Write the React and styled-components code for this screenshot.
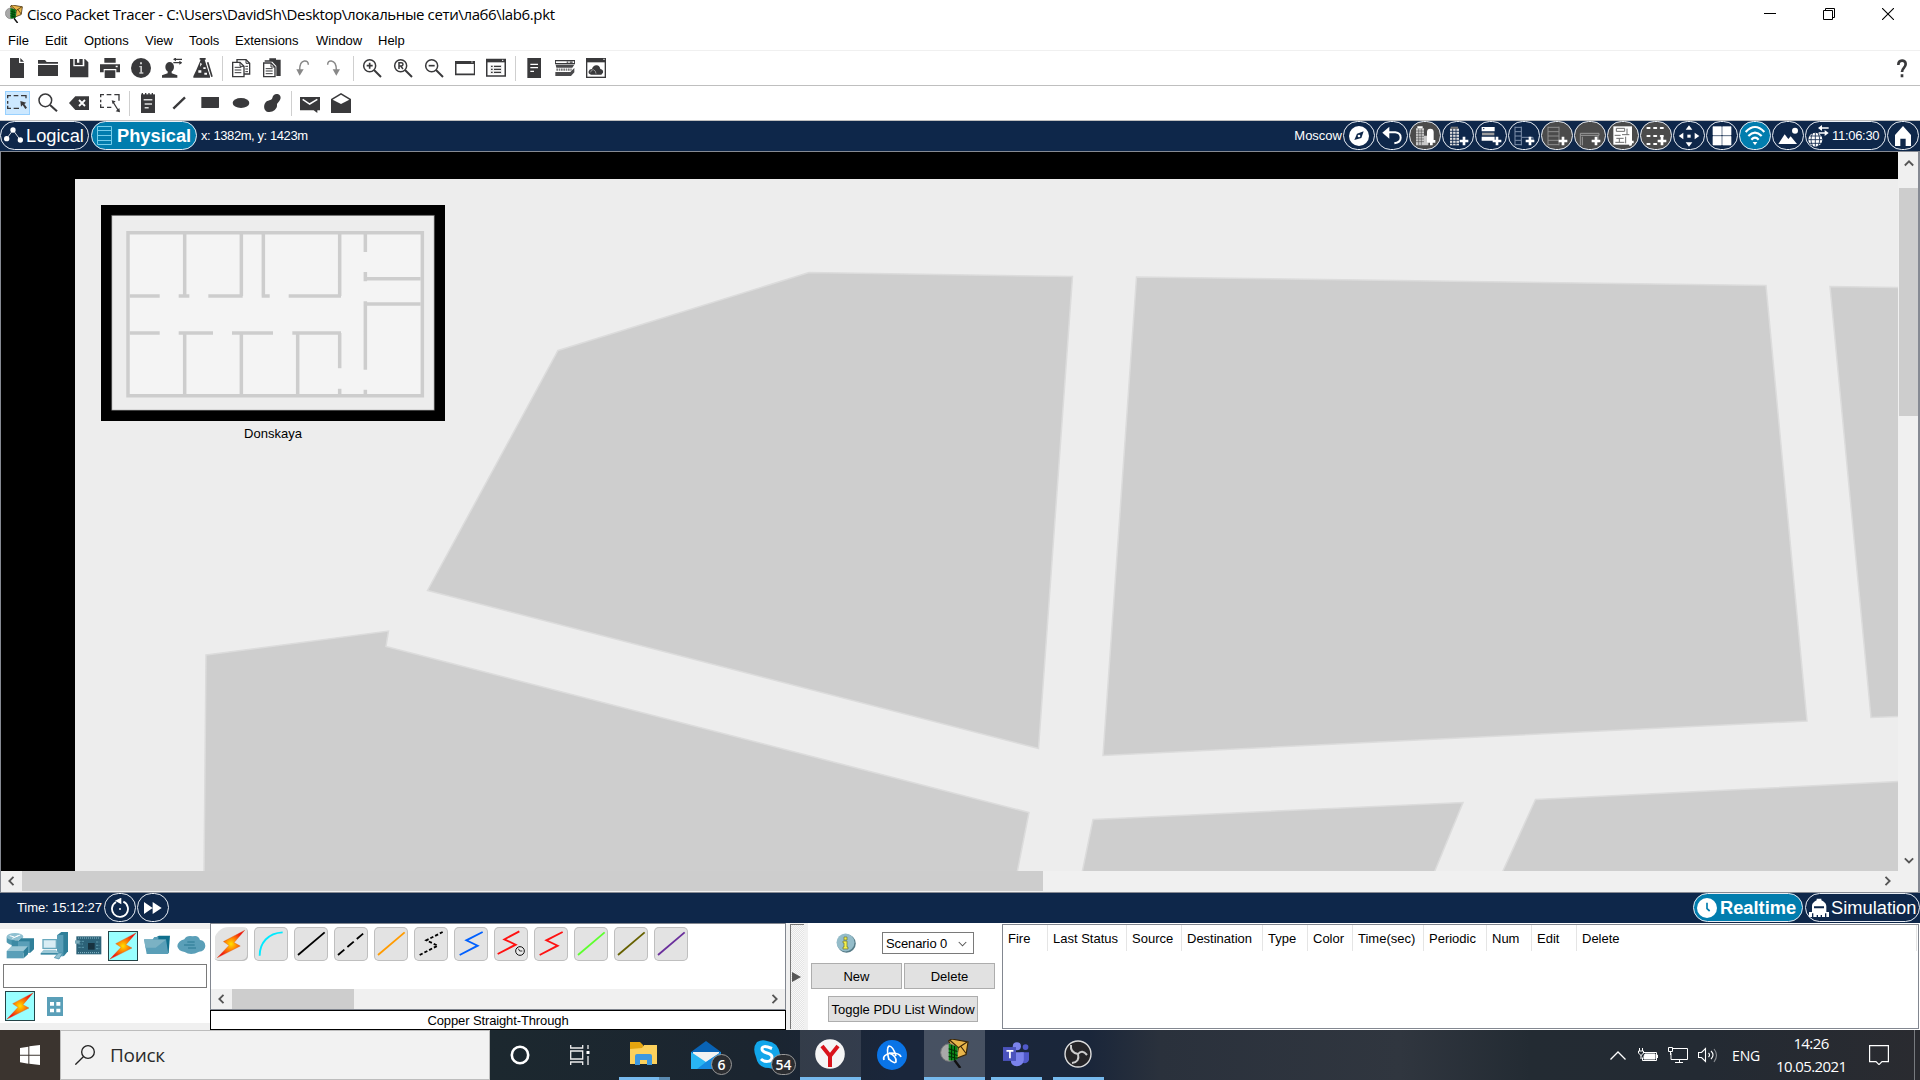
import React from "react";
import styled, { createGlobalStyle, css } from "styled-components";

const Global = createGlobalStyle`
  html, body { margin: 0; padding: 0; background: #fff; overflow: hidden; }
  *, *::before, *::after { box-sizing: border-box; }
  svg { display: block; flex: none; }
`;

const ui = '"Liberation Sans", Arial, sans-serif';
const sys = '"Open Sans", "Noto Sans", sans-serif';
const navy = "#0e274a";
const teal = "#017dae";
const ink = "#39393b";

const Screen = styled.div`
  width: 1920px;
  height: 1080px;
  display: flex;
  flex-direction: column;
  background: #fff;
  font: 13px/15px ${ui};
  color: #000;
  overflow: hidden;
`;

/* ---------- title bar and menu ---------- */
const TitleBar = styled.header`
  height: 28px;
  flex: none;
  display: flex;
  align-items: center;
  padding-left: 5px;
  gap: 4px;
`;
const Title = styled.div`
  font: 15px/20px ${sys};
  letter-spacing: -0.38px;
  white-space: nowrap;
  flex: 1;
`;
const WindowButtons = styled.div`
  display: flex;
  gap: 47px;
  padding-right: 26px;
`;
const MenuBar = styled.nav`
  height: 23px;
  flex: none;
  display: flex;
  padding: 5px 0 0 8px;
  border-bottom: 1px solid #f0f0f0;
`;
const MenuItem = styled.span`
  width: ${(p) => p.$w}px;
  white-space: nowrap;
`;

/* ---------- tool bars ---------- */
const ToolBar = styled.div`
  height: 35px;
  flex: none;
  display: flex;
  align-items: center;
  padding-left: 1.5px;
  border-bottom: 1px solid #bfbfbf;
`;
const Tool = styled.span`
  width: 31px;
  height: 34px;
  display: flex;
  align-items: center;
  justify-content: center;
`;
const ToolHighlight = styled.span`
  width: 25px;
  height: 24px;
  display: flex;
  align-items: center;
  justify-content: center;
  background: #cce8ff;
  border: 1px solid #99d1ff;
`;
const Divider = styled.span`
  width: 1px;
  height: 25px;
  margin: 0 3px;
  background: #cfcfcf;
`;
const HelpMark = styled.span`
  margin-left: auto;
  width: 36px;
  display: flex;
  justify-content: center;
`;

/* ---------- navy bars ---------- */
const NavyBar = styled.div`
  height: 30px;
  flex: none;
  display: flex;
  align-items: center;
  padding-bottom: 1px;
  background: ${navy};
  color: #fff;
`;
const Pill = styled.span`
  width: ${(p) => p.$w || 32}px;
  height: 29px;
  flex: none;
  display: flex;
  align-items: center;
  justify-content: ${(p) => (p.$w ? "flex-start" : "center")};
  padding-left: ${(p) => p.$pad || 0}px;
  margin-left: ${(p) => p.$ml || 0}px;
  gap: ${(p) => p.$gap || 0}px;
  border: 1px solid #e9eef5;
  border-radius: 15px;
  background: ${(p) => p.$bg || navy};
  font-size: ${(p) => p.$size || 13}px;
  font-weight: ${(p) => (p.$bold ? 700 : 400)};
  letter-spacing: ${(p) => p.$track || 0}px;
  white-space: nowrap;
`;
const Coordinates = styled.span`
  padding-left: 4px;
  letter-spacing: -0.42px;
`;
const NavRight = styled.div`
  margin-left: auto;
  display: flex;
  align-items: center;
  gap: 1px;
  padding-right: ${(p) => p.$pr ?? 1}px;
`;

/* ---------- physical workspace ---------- */
const Workspace = styled.main`
  height: 742px;
  flex: none;
  display: grid;
  grid-template: 719px 20px / 1897px 20px;
  border: 1px solid #868a93;
  border-right-width: 2px;
  background: #f0f0f0;
`;
const Viewport = styled.div`
  position: relative;
  overflow: hidden;
  background: #000;
`;
const Building = styled.figure`
  position: absolute;
  left: 100px;
  top: 53px;
  margin: 0;
  display: flex;
  flex-direction: column;
  align-items: center;
  gap: 5px;
`;
const ScrollV = styled.div`
  display: flex;
  flex-direction: column;
  align-items: center;
  justify-content: space-between;
  padding: 6px 0 6px 1px;
`;
const ScrollH = styled.div`
  height: ${(p) => p.$h || 20}px;
  display: flex;
  align-items: center;
  padding: 0 5px;
  background: #f0f0f0;
`;
const ThumbV = styled.span`
  width: 19px;
  height: 228px;
  margin: 20px 0 auto;
  background: #cdcdcd;
`;
const ThumbH = styled.span`
  width: ${(p) => p.$w}px;
  height: 100%;
  margin: 0 auto 0 6px;
  background: #cdcdcd;
`;

/* ---------- bottom panel ---------- */
const TimeText = styled.span`
  width: 104px;
  padding-left: 17px;
  letter-spacing: -0.1px;
  white-space: nowrap;
`;
const Bottom = styled.section`
  height: 107px;
  flex: none;
  display: flex;
  background: #fff;
`;
const DevicePanel = styled.div`
  width: 210px;
  border-top: 6px solid #f0f0f0;
  border-bottom: 7px solid #f0f0f0;
  display: flex;
  flex-direction: column;
  padding-top: 2px;
  gap: 3px;
`;
const DeviceRow = styled.div`
  display: flex;
  padding-left: ${(p) => p.$pad}px;
  gap: ${(p) => p.$gap}px;
`;
const Device = styled.span`
  width: 30px;
  height: 30px;
  flex: none;
  display: flex;
  align-items: center;
  justify-content: center;
  ${(p) =>
    p.$on &&
    css`
      background: #99ffff;
      border: 1px solid #244448;
    `}
`;
const SearchField = styled.div`
  width: 204px;
  height: 24px;
  flex: none;
  margin-left: 3px;
  border: 1px solid #7a7a7a;
  background: #fff;
`;
const CablePanel = styled.div`
  width: 576px;
  display: flex;
  flex-direction: column;
`;
const CableArea = styled.div`
  height: 87px;
  display: flex;
  flex-direction: column;
  justify-content: space-between;
  border: 1px solid #828790;
`;
const CableRow = styled.div`
  display: flex;
  gap: 6px;
  padding: 2.5px 0 0 2.5px;
`;
const Cable = styled.span`
  width: 34px;
  height: 34px;
  border-radius: 5px;
  background: #e3e3e3;
  box-shadow: inset 0 0 0 1px #bfbfbf;
  ${(p) =>
    p.$first &&
    css`
      border-radius: 15px 5px 5px 5px;
      box-shadow: inset -1px -1px 0 #bfbfbf;
      background: linear-gradient(90deg, #fff 1.5px, #e3e3e3 1.5px);
    `}
`;
const CableName = styled.div`
  height: 20px;
  border: 1px solid #000;
  text-align: center;
  line-height: 19px;
  letter-spacing: -0.12px;
`;
const Splitter = styled.div`
  width: 22px;
  display: flex;
  align-items: stretch;
  padding: 1px 4px 1px 4px;
  background: #f0f0f0;
`;
const SplitterGrip = styled.div`
  width: 14px;
  display: flex;
  align-items: center;
  padding-left: 1px;
  border-left: 1px solid #777;
  border-top: 1px solid #777;
  background: repeating-conic-gradient(#e4e4e4 0 25%, #f8f8f8 0 50%) 0 0 / 2px 2px;
`;
const ScenarioPanel = styled.div`
  width: 194px;
  display: flex;
  flex-direction: column;
  align-items: center;
  padding: 9px 7px 0 3px;
`;
const ScenarioRow = styled.div`
  align-self: stretch;
  display: flex;
  align-items: center;
  justify-content: space-between;
  padding: 0 21px 0 25px;
  height: 22px;
`;
const ScenarioSelect = styled.div`
  width: 92px;
  height: 22px;
  display: flex;
  align-items: center;
  justify-content: space-between;
  padding: 0 6px 0 3px;
  border: 1px solid #7a7a7a;
  letter-spacing: -0.1px;
  white-space: nowrap;
`;
const ButtonRow = styled.div`
  display: flex;
  gap: 2px;
  margin: 9px 0 7px;
`;
const PushButton = styled.div`
  width: ${(p) => p.$w}px;
  height: 26px;
  border: 1px solid #adadad;
  background: #e1e1e1;
  text-align: center;
  line-height: 26px;
  white-space: nowrap;
`;
const PduTable = styled.div`
  width: 917px;
  height: 105px;
  margin-top: 1px;
  border: 1px solid #828790;
`;
const HeaderRow = styled.div`
  height: 26px;
  display: flex;
`;
const HeaderCell = styled.div`
  width: ${(p) => p.$w}px;
  padding: 6px 0 0 5px;
  border-right: 1px solid #e5e5e5;
  white-space: nowrap;
`;

/* ---------- Windows task bar ---------- */
const TaskBar = styled.footer`
  height: 50px;
  flex: none;
  display: flex;
  background: linear-gradient(90deg, #3b342f 0, #3b342f 60px, #1c282f 490px, #1b2530 760px, #1a263b 900px, #1a263a 1090px, #2a313c 1160px, #30363f 1400px, #232b33 1530px, #232a33 1700px, #2a2b30 1920px);
  color: #fff;
  font-family: ${sys};
`;
const StartButton = styled.div`
  width: 60px;
  display: flex;
  align-items: center;
  justify-content: center;
`;
const TaskSearch = styled.div`
  width: 430px;
  display: flex;
  align-items: center;
  gap: 15px;
  padding-left: 14px;
  border: 1px solid #bdbdbd;
  background: #f2f2f2;
  color: #2b2b2b;
  font-size: 19px;
  letter-spacing: -0.3px;
`;
const TaskApp = styled.div`
  position: relative;
  width: ${(p) => p.$w}px;
  margin-right: ${(p) => p.$mr || 0}px;
  display: flex;
  align-items: center;
  justify-content: center;
  background: ${(p) => (p.$active ? "rgba(255,255,255,.2)" : p.$hover ? "rgba(255,255,255,.11)" : "none")};
  border-bottom: ${(p) => (p.$run ? "3px solid #76b9ed" : "0")};
  padding: 0 ${(p) => p.$pr || 0}px ${(p) => (p.$run ? 0 : 1)}px ${(p) => p.$pl || 0}px;
`;
const RunTail = styled.span`
  position: absolute;
  right: -11px;
  bottom: -3px;
  width: 11px;
  height: 3px;
  background: #5a8ab0;
`;
const Count = styled.span`
  position: absolute;
  left: ${(p) => p.$x}px;
  top: 24px;
  width: ${(p) => p.$w}px;
  height: 21px;
  border-radius: 11px;
  border: 1px solid #9a9a9a;
  background: #2b2d31;
  font: 600 14px/19px ${sys};
  text-align: center;
`;
const Tray = styled.div`
  margin-left: auto;
  width: 310px;
  display: flex;
  align-items: center;
`;
const TrayIcon = styled.span`
  width: ${(p) => p.$w}px;
`;
const Language = styled.span`
  width: 44px;
  font-size: 14px;
  letter-spacing: -0.1px;
`;
const Clock = styled.div`
  width: 70px;
  margin-right: 23px;
  text-align: center;
  font-size: 15px;
  line-height: 23px;
  letter-spacing: -0.6px;
  white-space: nowrap;
`;
const ShowDesktop = styled.span`
  align-self: stretch;
  width: 6px;
  margin-left: auto;
  border-left: 1px solid #777a7e;
`;

/* ---------- drawings ---------- */
const Ico = ({ s = 20, box = 60, children }) => (
  <svg width={s} height={s} viewBox={`0 0 ${box} ${box}`} fill={ink}>
    {children}
  </svg>
);
const S = { fill: "none", stroke: ink, strokeWidth: 5 };

const lens = (
  <g {...S} strokeWidth="4.5">
    <circle cx="23" cy="23" r="18" />
    <path d="M36 36L57 57" strokeWidth="6" />
  </g>
);

const tools1 = [
  [
    <path d="M9 0h27v15h15v45H9zM40 0l11 11H40z" />,
    <path d="M0 6h21l5 6h34v5H0zM0 21h60v33H0z" />,
    <path d="M3 3h10v22h33V3h2l10 10v45H3zM17 3h7v11h7V3h10v18H17z" />,
    <path d="M13 0h34v14H13zM0 19h60v24H49V33H11v10H0zM14 37h32v23H14zM47 23v5h6v-5z" fillRule="evenodd" />,
    <g><circle cx="30" cy="30" r="30" /><path d="M27 13h6v6h-6zM25 24h8v19h4v4H25v-4h3V28h-3z" fill="#c9c9c9" /></g>,
    <g><ellipse cx="23" cy="27" rx="13" ry="15" /><path d="M17 38h12v8l17 6v7H0v-7l17-6z" /><path d="M38 4h22M34 14h22" {...S} strokeWidth="4" /><path d="M42-2v12l-9-6zM52 8v12l9-6z" /></g>,
    <g><path d="M20 0h18v5h-3l16 50v4H1v-4l9-19L23 5h-3z" /><path d="M22 14l5 4-6 8zM16 37h9v7h-9zM31 28h7v5h-7zM34 44h8v6h-8z" fill="#fff" /><path d="M44 16l12 37" stroke="#fff" strokeWidth="8" /><path d="M44 13l13 43" {...S} /></g>,
  ],
  [
    <g {...S} strokeWidth="4"><path d="M18 12V5h27l11 11v32H39" /><path d="M5 13h22l12 12v31H5z" /><path d="M11 28h20M11 36h20M11 44h20M27 13v12h12M45 5v11h11M43 25h8M43 33h8M43 41h8" strokeWidth="3" /></g>,
    <g><path d="M8 7h14V1h20v4h14v49H43V24L31 11H8z" /><path d="M5 15h22l12 12v29H5z" fill="#fff" stroke={ink} strokeWidth="4" /><path d="M11 32h21M11 39h21M11 47h21M27 15v12h12" {...S} strokeWidth="3" /></g>,
    <g><path d="M46 20Q46 8 34 9Q20 11 20 36" fill="none" stroke="#888" strokeWidth="4.5" /><path d="M10 34h22L20 53z" fill="#888" /></g>,
    <g><path d="M11 20Q11 8 22 9Q37 11 37 36" fill="none" stroke="#888" strokeWidth="4.5" /><path d="M26 34h22L37 53z" fill="#888" /></g>,
  ],
  [
    <g>{lens}<path d="M23 14v18M14 23h18" {...S} /></g>,
    <g>{lens}<path d="M18 33V14h7a5 5 0 010 10h-6M23 24l7 9" {...S} strokeWidth="4.5" /></g>,
    <g>{lens}<path d="M14 23h18" {...S} /></g>,
    <g><path d="M2 12h57v37H2z" {...S} /><path d="M0 9h60v9H0z" /><path d="M49 12h4" stroke="#fff" strokeWidth="3" /></g>,
    <g><path d="M2 5h56v49H2z" {...S} /><path d="M0 3h60v10H0z" /><path d="M12 21h36v27H12z" fill="#eee" /><path d="M15 25h5M15 34h5M15 43h5M24 25h21M24 34h21M24 43h21" {...S} strokeWidth="4" /><path d="M48 7h4" stroke="#fff" strokeWidth="3" /></g>,
  ],
  [
    <g><path d="M10 0h41v60H10z" /><path d="M19 19h23M19 29h23M19 40h11" stroke="#fff" strokeWidth="4" /></g>,
    <g><path d="M1 8h58v9H1z" fill="#fff" stroke={ink} strokeWidth="3.5" /><path d="M35 12.500h5M44 12.500h9" {...S} strokeWidth="4" /><path d="M2 20h56l-6 9H4zM1 42h45l12-12v13L48 54H1z" fill="#4a4a4c" /><path d="M4 35h46" stroke="#777" strokeWidth="7" strokeDasharray="5 2" /></g>,
    <g><path d="M0 0h60v60H0z" /><path d="M4 13h52v43H4z" fill="#fff" /><path d="M15 50q-9-2-7-10 2-7 10-7 4-12 14-11 9 1 11 11 10 2 8 11l-5 6z" /><path d="M14 43q0-8 8-8 8 3 8 12" fill="none" stroke="#999" strokeWidth="3" /><path d="M52 4h4" stroke="#fff" strokeWidth="3" /></g>,
  ],
];

const tools2 = [
  [
    <g {...S} strokeWidth="4"><path d="M2 16V8h10M20 8h14M42 8h15v8M2 24v8M2 38v8h10M20 46h16" /><path d="M40 24l18 5-6 4 8 11-5 4-8-12-5 5z" fill={ink} stroke="none" /></g>,
    <g {...S} strokeWidth="4.5"><circle cx="22" cy="22" r="19" /><path d="M36 36l21 19" strokeWidth="6" /></g>,
    <g><path d="M0 30L19 10h41v41H19z" /><path d="M30 21l18 18M48 21L30 39" stroke="#fff" strokeWidth="5.5" /></g>,
    <g {...S}><path d="M2 13V5h10M20 5h14M43 5h14v18M2 20v8M2 34v9h10M21 43h13" strokeWidth="4" /><path d="M39 27l17 27" strokeWidth="4" /><path d="M35 22l12 3-9 8zM60 58l-13-3 11-10z" fill={ink} stroke="none" /></g>,
  ],
  [
    <g><path d="M9 4h42v56H9z" /><path d="M13 0v6M23 0v6M33 0v6M43 0v6" {...S} strokeWidth="4" /><path d="M17 20h26M20 33h22M20 44h12" stroke="#ddd" strokeWidth="4.5" /></g>,
    <path d="M13 47L48 13" {...S} strokeWidth="7" />,
    <path d="M4 12h52q1 0 1 1v30q0 2-2 2H5q-1 0-1-1z" />,
    <ellipse cx="30" cy="30" rx="25" ry="15" />,
    <path d="M31 15C33 5 41 1 49 4c8 4 9 13 3 20-4 6-8 7-7 13 1 11-13 22-26 20C6 55 3 39 10 29c6-9 19-5 21-14z" />,
  ],
  [
    <g><path d="M0 12h60v40h-8v8l-11-8H0z" /><path d="M8 19l21 14 23-14" fill="none" stroke="#fff" strokeWidth="4.5" /></g>,
    <g><path d="M0 18L30 0l30 18v42H0z" /><path d="M5 20L30 5l25 15-25 13z" fill="#fff" /></g>,
  ],
];

const plus = <path d="M54 38v26M41 51h26" stroke="#fff" strokeWidth="8" />;
const W = { fill: "none", stroke: "#fff", strokeWidth: 3 };
const grey = "#4b4b4b";
const navIcons = [
  [null, <g><circle cx="36" cy="36" r="30" fill="#fff" /><path d="M22 48l8-19 20-7-7 20z" fill={navy} /><circle cx="36" cy="36" r="4" fill="#fff" /></g>],
  [null, <g><path d="M7 26L28 8v36z" fill="#fff" /><path d="M24 25h22q16 2 16 16T43 58" {...W} strokeWidth="6" /></g>],
  [grey, <g><path d="M9 13h24v51H9zM33 35h13v29H33z" fill="#c9c9c9" /><path d="M9 21h24M9 29h24M9 37h24M9 45h24M9 53h24M17 14v50M25 14v50" stroke={grey} strokeWidth="1.800" /><path d="M13 7h16v6H13zM42 24q0-10 10-10t10 10v30H42z" fill="#fff" /><path d="M55 40v24M43 52h24" stroke="#fff" strokeWidth="8" /></g>],
  [null, <g><path d="M12 14h27v50H12z" fill="#ddd" /><path d="M14 8h22v7H14z" fill="#777" /><path d="M12 22h27M12 31h27M12 40h27M12 49h27M12 58h27M20 14v50M30 14v50" stroke={navy} strokeWidth="2.500" />{plus}</g>],
  [null, <g><path d="M8 9h39v13H8zM8 38h39v12H8z" fill="#fff" /><path d="M9 26h37v8H9z" fill="#9c9c9c" /><path d="M12 14h4" stroke={navy} strokeWidth="3" />{plus}</g>],
  [null, <g><path d="M9 8v56M28 8v56M9 10h19M9 23h19M9 36h19M9 49h19M9 62h19M30 40h33v14" stroke="#7f91ab" strokeWidth="3" fill="none" />{plus}</g>],
  [grey, <g><path d="M9 8v56M42 8v56M9 10h33M9 23h33M9 36h33M9 49h33M9 62h33" stroke="#8d8d8d" strokeWidth="3" fill="none" />{plus}</g>],
  [grey, <g><path d="M7 28h56v6H7zM7 34v30M13 38v26M60 36v20" stroke="#9a9a9a" strokeWidth="3" fill="none" />{plus}</g>],
  [grey, <g><path d="M7 7h56v55H7z" fill="#fff" /><path d="M16 13h25v9H16zM11 34h18M33 32h22M16 43h22M13 55h27M48 14v18M44 38v20M25 43v12" stroke="#6c6c6c" strokeWidth="3" fill="none" /><path d="M58 43v22M48 54h20" stroke="#fff" strokeWidth="7" /></g>],
  [grey, <g><path d="M10 12h7M30 12h7M50 12h7M10 36h7M30 36h7M50 36h7M10 60h7M30 60h7" stroke="#fff" strokeWidth="5.500" strokeLinecap="round" />{plus}</g>],
  [null, <g fill="#fff"><path d="M36 4l10 13H26zM36 68l10-13H26zM5 36l14-10v20zM67 36L53 26v20z" /><path d="M31 32h10v9H31z" /></g>],
  [null, <path d="M9 8h25v25H9zM38 8h25v25H38zM9 37h25v26H9zM38 37h25v26H38z" fill="#fff" stroke="#fff" strokeWidth="2" strokeLinejoin="round" />],
  [teal, <g {...W} strokeWidth="6.500"><path d="M8 24q28-30 56 0M16 36q20-20 40 0M25 47q11-12 22 0" /><path d="M29 54h14l-7 10z" fill="#fff" stroke="none" /></g>],
  [null, <g fill="#fff"><path d="M7 60l19-29 11 14 7-8 19 23z" /><circle cx="57" cy="20" r="9" /></g>],
];

const Globe = () => (
  <svg width="22" height="22" viewBox="0 0 66 66">
    <circle cx="22" cy="44" r="21" fill="#fff" />
    <path d="M1 44h42M22 23v42M5 33h34M5 55h34M14 24q-10 20 0 40M30 24q10 20 0 40" fill="none" stroke={navy} strokeWidth="2.5" />
    <path d="M34 9h28M32 24h25" stroke="#fff" strokeWidth="5" />
    <path d="M42 0v18L30 9zM50 15v18l12-9z" fill="#fff" />
  </svg>
);

const Chevron = ({ d, w = 12, weight = 2.2 }) => (
  <svg width={w} height={w} viewBox="0 0 12 12" fill="none" stroke="#555" strokeWidth={weight}>
    <path d={{ up: "M1 9l5-5 5 5", down: "M1 4l5 5 5-5", left: "M9 1L4 6l5 5", right: "M3 1l5 5-5 5" }[d]} />
  </svg>
);

const Bolt = ({ s = 28 }) => (
  <svg width={s} height={s} viewBox="0 0 84 84">
    <defs>
      <radialGradient id="bolt" cx="50%" cy="50%" r="50%">
        <stop offset="0" stopColor="#ffe100" />
        <stop offset=".35" stopColor="#ff9600" />
        <stop offset="1" stopColor="#f20d10" />
      </radialGradient>
    </defs>
    <path d="M82 2L20 35l16 11L2 82l67-34-18-10z" fill="url(#bolt)" stroke="#d9571d" strokeWidth="1" />
  </svg>
);

const steel = "#5a9fb8";
const devices = [
  <svg width="30" height="30" viewBox="0 0 90 90"><path d="M5 17v17q8 9 24 9V22z" fill="#4e98b0" /><ellipse cx="30" cy="17" rx="25" ry="11" fill="#8fc0d1" /><path d="M14 14l14 4M32 17l14-5M22 22l18-8" stroke="#fff" strokeWidth="3" /><path d="M20 28h20v20H20z" fill="#3d8aa4" /><path d="M39 30l10-8h38v33l-11 10H39z" fill="#2f7f99" /><path d="M39 31h35v34H39z" fill="#5a9fb8" /><path d="M5 60l14-14h50L56 60z" fill="#9cc8d6" /><path d="M5 60h51v22H5z" fill="#5a9fb8" /><path d="M56 60l13-14v24L56 82z" fill="#2f7f99" /></svg>,
  <svg width="30" height="30" viewBox="0 0 90 90"><path d="M55 12l12-9h20v58l-12 14H55z" fill="#2f7f99" /><path d="M54 12h19v64H54z" fill="#5a9fb8" /><path d="M12 26h40v26H12z" fill="#d9edf4" stroke="#6aa9be" strokeWidth="4" /><path d="M14 56h36l10 10H5z" fill="#9cc8d6" /><path d="M5 66h50v5H5z" fill="#3d8aa4" /><path d="M46 80l12-14h13L60 84z" fill="#8fc0d1" stroke="#3d8aa4" strokeWidth="2" /></svg>,
  <svg width="30" height="30" viewBox="0 0 90 90"><path d="M7 16h75v54H7z" fill="#2c6278" /><path d="M12 21h65M12 65h65" stroke="#8cbccb" strokeWidth="3" strokeDasharray="3 3" /><path d="M42 36h20v20H42z" fill="#17323f" /><path d="M13 31h17M13 39h14M13 49h17M66 33h11M66 43h11M66 53h11" stroke="#5c98ab" strokeWidth="3" strokeDasharray="7 3" /><path d="M3 28h14v10H3z" fill="#79a9b8" /></svg>,
  <Bolt />,
  <svg width="30" height="30" viewBox="0 0 90 90"><path d="M42 19l9-5h33l-4 52H60z" fill="#0f6f8d" /><path d="M6 25h26l5-7h12v7h23l7 44H14z" fill="#5a9fb8" /><path d="M7 26h64l-30 24-31 0z" fill="#7bb2c4" /></svg>,
  <svg width="30" height="30" viewBox="0 0 90 90"><path d="M25 25q7-13 25-9 17-5 22 11 15 2 16 18-1 16-19 17-24 13-43 1Q7 61 4 46q2-17 21-21z" fill={steel} /><path d="M34 33h22M24 42h32M36 51h24" stroke="#287892" strokeWidth="3" /></svg>,
];

const cables = [
  null,
  <path d="M17 86C17 48 42 18 86 16" stroke="#00eaff" />,
  <path d="M12 84L92 16" stroke="#000" />,
  <path d="M12 84L92 16" stroke="#000" strokeDasharray="25 12" />,
  <path d="M12 84L92 16" stroke="#ff9b00" />,
  <path d="M17 84l54-28-34-16 49-25" stroke="#000" strokeDasharray="10 6" />,
  <path d="M17 84l54-28-34-16 49-25" stroke="#0060ff" />,
  <g><path d="M11 81l54-28-34-16 45-24" stroke="#f11" /><circle cx="78" cy="72" r="13" stroke="#111" strokeWidth="3" fill="#e9e9e9" /><path d="M73 65l4 7h8" stroke="#111" strokeWidth="2.5" /></g>,
  <path d="M17 84l54-28-34-16 49-25" stroke="#f11" />,
  <path d="M12 84L92 16" stroke="#5dff2e" />,
  <path d="M12 84L92 16" stroke="#666100" />,
  <path d="M12 84L92 16" stroke="#6a2f9c" />,
];

const PacketTracerLogo = ({ s = 18 }) => (
  <svg width={s} height={s} viewBox="0 0 30 30">
    <path d="M9 2l3-2 17 3-2 13-10 4z" fill="#e9b54b" stroke="#3a2607" strokeWidth="1.2" />
    <path d="M10 1l9 8 9-6M19 9l-2 11M27 15l-6-8" fill="none" stroke="#3a2607" strokeWidth="1.2" />
    <ellipse cx="9.5" cy="14" rx="8.800" ry="9" fill="#a9a9a9" stroke="#7b7b7b" />
    <path d="M9 5l9 3v13q-4 2-9 1z" fill="#0a8a18" />
    <path d="M12 6v16M15 7v15M9 10l9 3M9 14l9 3M9 18l9 2" stroke="#012c04" strokeWidth="1.1" />
    <path d="M15 22l6 8" stroke="#111" strokeWidth="2.4" />
  </svg>
);

const CityMap = () => (
  <svg width="1897" height="719" viewBox="1 152 1897 719">
    <path d="M75 179h1823v692H75z" fill="#ededed" />
    <g fill="#cecece" stroke="#dcdcdc" strokeWidth="1.5">
      <path d="M558 350.500L809 272.500L1072.500 276.500L1038.500 748.500L427.500 590.500z" />
      <path d="M1136.500 277L1766 285.500L1807 721L1103 755.500z" />
      <path d="M1830 286.500L1900 287.500V716.500L1871 717.500z" />
      <path d="M206 655L388.500 631L386 646.500L1029 812.500L1017 873H204z" />
      <path d="M1093 819.500L1463 802.500L1434 873H1082z" />
      <path d="M1535.500 799.500L1900 781.500V873H1502z" />
    </g>
  </svg>
);

const FloorPlan = () => (
  <svg width="344" height="216" viewBox="33 45 1032 648">
    <path d="M33 45h1032v648H33z" />
    <path d="M65 76h968v585H65z" fill="#ededed" stroke="#444" strokeWidth="2" />
    <path d="M114 129h883v488H114z" fill="#f4f4f4" />
    <g fill="none" stroke="#cdcdcd" strokeWidth="10.5">
      <path d="M114 128.500h883v489H114z" />
      <path d="M284 129v189M454 129v189M520 129v189M749 129v189M826 129v57M119 318h90M266 318h32M355 318h103M515 318h24M596 318h157M119 429h90M266 429h103M426 429h123M607 429h146M284 429v188M454 429v188M623 429v188M749 429v106M749 596v20M826 599v18M826 246v28M826 266h166M826 334v205M826 342h166" />
    </g>
  </svg>
);

const menu = [["File", 37], ["Edit", 39], ["Options", 61], ["View", 44], ["Tools", 46], ["Extensions", 81], ["Window", 62], ["Help", 40]];
const columns = [["Fire", 45], ["Last Status", 79], ["Source", 55], ["Destination", 81], ["Type", 45], ["Color", 45], ["Time(sec)", 71], ["Periodic", 63], ["Num", 45], ["Edit", 45], ["Delete", 340]];

const ToolGroups = ({ groups, selected }) =>
  groups.map((g, gi) => (
    <React.Fragment key={gi}>
      {gi > 0 && <Divider />}
      {g.map((d, i) => (
        <Tool key={i}>
          {selected && gi === 0 && i === 0 ? <ToolHighlight><Ico>{d}</Ico></ToolHighlight> : <Ico>{d}</Ico>}
        </Tool>
      ))}
    </React.Fragment>
  ));

export default function App() {
  return (
    <Screen>
      <Global />
      <TitleBar>
        <PacketTracerLogo />
        <Title>Cisco Packet Tracer - C:\Users\DavidSh\Desktop\локальные сети\лаб6\lab6.pkt</Title>
        <WindowButtons>
          <svg width="12" height="12" fill="none" stroke="#000"><path d="M0 5.500h12" /></svg>
          <svg width="12" height="12" fill="none" stroke="#000"><path d="M.5 2.500h9v9h-9zM2.500 2.500v-2h9v9h-2" /></svg>
          <svg width="12" height="12" fill="none" stroke="#000" strokeWidth="1.1"><path d="M0 0l12 12M12 0L0 12" /></svg>
        </WindowButtons>
      </TitleBar>
      <MenuBar>{menu.map(([t, w]) => <MenuItem key={t} $w={w}>{t}</MenuItem>)}</MenuBar>

      <ToolBar>
        <ToolGroups groups={tools1} />
        <HelpMark>
          <svg width="10" height="19" viewBox="0 0 30 57" fill="none" stroke={ink} strokeWidth="8">
            <path d="M4 18C4 1 26 1 26 15c0 12-11 11-11 24M15 46v9" />
          </svg>
        </HelpMark>
      </ToolBar>
      <ToolBar><ToolGroups groups={tools2} selected /></ToolBar>

      <NavyBar>
        <Pill $w={89} $pad={3} $gap={2} $size={18.3}>
          <svg width="20" height="20" viewBox="0 0 60 60" fill="#fff">
            <path d="M8 38L27 12l22 30" fill="none" stroke="#fff" strokeWidth="2.5" />
            <circle cx="8" cy="38" r="8" /><circle cx="27" cy="12" r="8" /><circle cx="49" cy="42" r="8" />
          </svg>
          Logical
        </Pill>
        <Pill $w={106} $pad={5} $gap={5} $ml={2} $size={18.3} $bold $bg={teal}>
          <svg width="15" height="19" fill="none" stroke="#76cdea"><path d="M.5.5h14v18H.5zM0 4.500h15M0 9.500h15M0 14.500h15" /></svg>
          Physical
        </Pill>
        <Coordinates>x: 1382m, y: 1423m</Coordinates>
        <NavRight>
          Moscow
          {navIcons.map(([bg, d], i) => <Pill key={i} $bg={bg}><Ico s={24} box={72}>{d}</Ico></Pill>)}
          <Pill $w={81} $pad={2} $gap={2} $track={-0.3}><Globe />11:06:30</Pill>
          <Pill><svg width="20" height="20" viewBox="0 0 60 60"><path d="M30 0l24 27v33H38V38H22v22H6V27z" fill="#fff" /></svg></Pill>
        </NavRight>
      </NavyBar>

      <Workspace>
        <Viewport>
          <CityMap />
          <Building>
            <FloorPlan />
            <figcaption>Donskaya</figcaption>
          </Building>
        </Viewport>
        <ScrollV><Chevron d="up" w={10} /><ThumbV /><Chevron d="down" w={10} /></ScrollV>
        <ScrollH><Chevron d="left" w={10} /><ThumbH $w={1021} /><Chevron d="right" w={10} /></ScrollH>
      </Workspace>

      <NavyBar>
        <TimeText>Time: 15:12:27</TimeText>
        <Pill>
          <svg width="20" height="20" viewBox="0 0 60 60"><path d="M18 12a24 24 0 1 0 22-1" {...W} strokeWidth="5.5" /><path d="M34-1v20L15 8z" fill="#fff" /><circle cx="30" cy="33" r="3" fill="#fff" /></svg>
        </Pill>
        <Pill $ml={1}>
          <svg width="18" height="12" viewBox="0 0 54 36"><path d="M0 0l26 18L0 36zM26 0l27 18-27 18z" fill="#fff" /></svg>
        </Pill>
        <NavRight $pr={0}>
          <Pill $w={110} $pad={3} $gap={3} $size={18.3} $bold $bg={teal}>
            <svg width="20" height="20" viewBox="0 0 60 60"><circle cx="30" cy="30" r="30" fill="#fff" /><path d="M30 14v18l8 7" fill="none" stroke={teal} strokeWidth="5" /></svg>
            Realtime
          </Pill>
          <Pill $w={115} $pad={3} $gap={2} $ml={1} $size={18.3}>
            <svg width="20" height="19" viewBox="0 0 60 57"><path d="M0 42h9V25C9 14 19 9 23 7V2h14v5c4 2 15 7 15 18v17h8v15H0z" fill="#fff" /><path d="M15 25h30v6H15zM9 46h4v11H9zM23 51h4v6h-4zM35 51h4v6h-4zM48 46h4v11h-4z" fill={navy} /></svg>
            Simulation
          </Pill>
        </NavRight>
      </NavyBar>

      <Bottom>
        <DevicePanel>
          <DeviceRow $pad={5} $gap={4.3}>{devices.map((d, i) => <Device key={i} $on={i === 3}>{d}</Device>)}</DeviceRow>
          <SearchField />
          <DeviceRow $pad={5} $gap={5}>
            <Device $on><Bolt /></Device>
            <Device><svg width="16" height="19" viewBox="0 0 48 57"><path d="M0 0h48v57H0z" fill={steel} /><path d="M9 15h12v11H9zM28 15h12v11H28zM9 35h12v11H9zM28 35h12v11H28z" fill="#fff" /></svg></Device>
          </DeviceRow>
        </DevicePanel>
        <CablePanel>
          <CableArea>
            <CableRow>
              {cables.map((c, i) => (
                <Cable key={i} $first={i === 0}>
                  {c ? <svg width="34" height="34" viewBox="0 0 102 102" fill="none" strokeWidth="5.5">{c}</svg> : <Ico s={34} box={34}><g transform="translate(2.5 2.5)"><Bolt s={29} /></g></Ico>}
                </Cable>
              ))}
            </CableRow>
            <ScrollH $h={20}><Chevron d="left" w={10} /><ThumbH $w={122} /><Chevron d="right" w={10} /></ScrollH>
          </CableArea>
          <CableName>Copper Straight-Through</CableName>
        </CablePanel>
        <Splitter>
          <SplitterGrip><svg width="9" height="10"><path d="M0 0l9 5-9 5z" fill="#555" /></svg></SplitterGrip>
        </Splitter>
        <ScenarioPanel>
          <ScenarioRow>
            <svg width="20" height="20"><circle cx="10.5" cy="10.5" r="9.3" fill="#557b87" /><circle cx="9.5" cy="9.5" r="9" fill="#94bcc9" /><path d="M8 4h3v3H8zM7 8h4v6h1v2H7v-2h1v-4H7z" fill="#f4f04a" stroke="#6f7633" strokeWidth=".7" /></svg>
            <ScenarioSelect>Scenario 0 <Chevron d="down" w={9} weight={1.4} /></ScenarioSelect>
          </ScenarioRow>
          <ButtonRow><PushButton $w={91}>New</PushButton><PushButton $w={91}>Delete</PushButton></ButtonRow>
          <PushButton $w={150}>Toggle PDU List Window</PushButton>
        </ScenarioPanel>
        <PduTable>
          <HeaderRow>{columns.map(([t, w]) => <HeaderCell key={t} $w={w}>{t}</HeaderCell>)}</HeaderRow>
        </PduTable>
      </Bottom>

      <TaskBar>
        <StartButton>
          <svg width="20" height="20" viewBox="0 0 60 60" fill="#fff"><path d="M0 9l25-4v24H0zM28 4l32-4v29H28zM0 32h25v24L0 52zM28 32h32v28l-32-4z" /></svg>
        </StartButton>
        <TaskSearch>
          <svg width="20" height="20" viewBox="0 0 60 60" fill="none" stroke="#222" strokeWidth="4"><circle cx="39" cy="21" r="19" /><path d="M25 35L1 59" /></svg>
          Поиск
        </TaskSearch>
        <TaskApp $w={60}><svg width="20" height="20"><circle cx="10" cy="10" r="8.2" fill="none" stroke="#fff" strokeWidth="2.6" /></svg></TaskApp>
        <TaskApp $w={60} $mr={9}>
          <svg width="20" height="20" fill="none" stroke="#eee" strokeWidth="1.3"><path d="M.7 0v3h12V0M.7 20v-3h12v3M.7 6h12v8H.7zM18 0v4M18 11v9" /><path d="M16.500 6h3v3h-3z" fill="#fff" stroke="none" /></svg>
        </TaskApp>
        <TaskApp $w={40} $mr={22} $run $pl={10}>
          <svg width="28" height="23" viewBox="0 0 28 23"><path d="M0 0h10l3 3v6H0z" fill="#e5a50f" /><path d="M0 7l12-1 2-3h13v19H0z" fill="#fcd15c" /><path d="M5 23V14q0-2 2-2h13q2 0 2 2v9h-5v-5h-7v5z" fill="#3d98e0" /></svg>
          <RunTail />
        </TaskApp>
        <TaskApp $w={50}>
          <svg width="30" height="28" viewBox="0 0 30 28"><path d="M0 11L15 0l15 11v6H0z" fill="#0963b5" /><path d="M2 11h26v9L15 22 2 18z" fill="#f2f2f2" /><path d="M0 11l15 10L30 11v17H0z" fill="#29b5f3" /><path d="M15 21L30 11v17H6z" fill="#168ae0" /></svg>
          <Count $x={30} $w={21}>6</Count>
        </TaskApp>
        <TaskApp $w={69} $pl={5}>
          <svg width="28" height="29" viewBox="0 0 28 29"><path d="M3 2Q8-1 13 1 24 2 26 14q4 8-2 13-4 3-9 1Q4 28 2 17-2 8 3 2z" fill="#12a6ea" /><path d="M18 8.500q-10-4-10 .5c0 5 10 3 10 8 0 6-8 5-11 2" fill="none" stroke="#fff" strokeWidth="3" /></svg>
          <Count $x={40} $w={25}>54</Count>
        </TaskApp>
        <TaskApp $w={61} $run $hover $pr={1}>
          <svg width="30" height="30"><circle cx="15" cy="15" r="14.8" fill="#f5f5f5" /><path d="M7 7l8 10 8-10M15 16v12" fill="none" stroke="#d9131b" strokeWidth="4" /></svg>
        </TaskApp>
        <TaskApp $w={63} $pr={1}>
          <svg width="30" height="30" fill="none" stroke="#fff" strokeWidth="1.7"><circle cx="15" cy="15" r="15" fill="#0a74e6" stroke="none" /><path d="M12 20Q9 8 12 6q4 0 7 10" /><path d="M7 20q-2-5 7-7 9 0 10 4" /><path d="M12 13q8 3 7 9-2 2-7-3" /></svg>
        </TaskApp>
        <TaskApp $w={61} $mr={6} $run $active $pr={1}><PacketTracerLogo s={29} /></TaskApp>
        <TaskApp $w={51} $mr={11} $run $pr={2}>
          <svg width="26" height="28" viewBox="0 0 30 28"><circle cx="16" cy="5" r="4.7" fill="#7b83eb" /><circle cx="26" cy="6" r="3.3" fill="#5059c9" /><path d="M20 12h10v9q-2 5-8 3z" fill="#5059c9" /><path d="M9 12h15v9q-1 7-8 7t-7-7z" fill="#7b83eb" /><path d="M0 6h15v16H0z" fill="#4b53bc" /><path d="M4 10.500h8M8 10.500V19" stroke="#fff" strokeWidth="2" /></svg>
        </TaskApp>
        <TaskApp $w={51} $run $pr={2}>
          <svg width="28" height="28"><circle cx="14" cy="14" r="13" fill="#252427" stroke="#ddd" strokeWidth="1.4" /><path d="M7 5q-1 8 7 9 4-5 9 1M14 14q2 8-6 9" fill="none" stroke="#ccc" strokeWidth="2" /></svg>
        </TaskApp>
        <Tray>
          <TrayIcon $w={28}><svg width="16" height="9" fill="none" stroke="#fff" strokeWidth="1.3"><path d="M.5 8.500L8 1l7.500 7.500" /></svg></TrayIcon>
          <TrayIcon $w={30}><svg width="20" height="15" fill="none" stroke="#fff"><path d="M5.500 4.500h13v8h-14v-3M18.500 7h1v3" /><path d="M7 6h10v5H6V8z" fill="#fff" /><path d="M1.500 0v3M4.500 0v3M.5 3h5v2L3 7.500.5 5zM3 7v4" /></svg></TrayIcon>
          <TrayIcon $w={30}><svg width="20" height="16" fill="none" stroke="#fff"><path d="M4 1.500h15.500v11H3V6M11.500 12.500v3M7 15.500h8M.5.500h4v4h-4zM2.500 4v4" /></svg></TrayIcon>
          <TrayIcon $w={34}><svg width="21" height="18" fill="none" stroke="#fff" strokeWidth="1.1"><path d="M.5 6.500h3l4-4v13l-4-4h-3zM10.500 7q2 2 0 4M13 5q4 4 0 8" /><path d="M16 3q5 6 0 13" stroke="#8b8e92" /></svg></TrayIcon>
          <Language>ENG</Language>
          <Clock>14:26<br />10.05.2021</Clock>
          <svg width="20" height="20" fill="none" stroke="#fff" strokeWidth="1.2"><path d="M.6 .6h18.800v16H13l-3 3-3-3H.6z" /></svg>
          <ShowDesktop />
        </Tray>
      </TaskBar>
    </Screen>
  );
}
